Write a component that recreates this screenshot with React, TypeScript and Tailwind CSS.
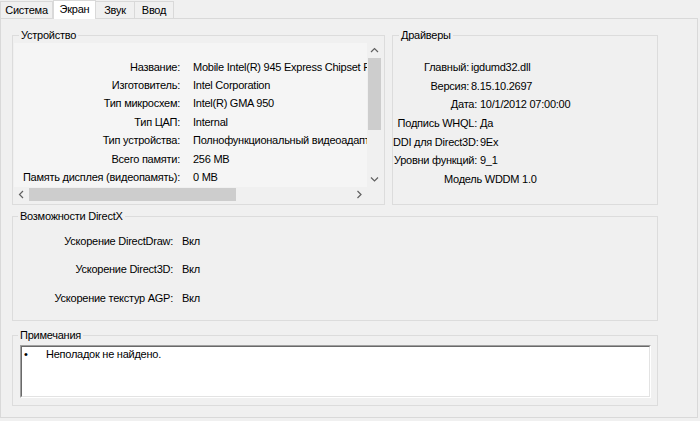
import React from "react";

function Chevron({ dir }: { dir: "up" | "down" | "left" | "right" }) {
  const d =
    dir === "up"
      ? "M1 5 L4.5 1.5 L8 5"
      : dir === "down"
      ? "M1 1.5 L4.5 5 L8 1.5"
      : dir === "left"
      ? "M5 1 L1.5 4.5 L5 8"
      : "M1.5 1 L5 4.5 L1.5 8";
  const w = dir === "up" || dir === "down" ? 9 : 7;
  const h = dir === "up" || dir === "down" ? 7 : 9;
  return (
    <svg width={w} height={h} viewBox={`0 0 ${w} ${h}`} fill="none">
      <path d={d} stroke="#606060" strokeWidth="1.2" />
    </svg>
  );
}

const deviceRows: [string, string][] = [
  ["Название:", "Mobile Intel(R) 945 Express Chipset Family"],
  ["Изготовитель:", "Intel Corporation"],
  ["Тип микросхем:", "Intel(R) GMA 950"],
  ["Тип ЦАП:", "Internal"],
  ["Тип устройства:", "Полнофункциональный видеоадаптер"],
  ["Всего памяти:", "256 MB"],
  ["Память дисплея (видеопамять):", "0 MB"],
];

const dxRows: [string, string][] = [
  ["Ускорение DirectDraw:", "Вкл"],
  ["Ускорение Direct3D:", "Вкл"],
  ["Ускорение текстур AGP:", "Вкл"],
];

export default function App() {
  return (
    <div className="w-[700px] h-[421px] bg-[#f0f0f0] text-[11px] leading-[13px] tracking-[-0.25px] text-black font-['Liberation_Sans',Arial,sans-serif] overflow-hidden">
      {/* Tabs */}
      <div className="relative z-10 flex h-[19px] items-start">
        <div className="mt-[1px] h-[17px] w-[53px] border border-b-0 border-[#d9d9d9] bg-[#f0f0f0] flex items-center justify-center">
          Система
        </div>
        <div className="h-[19px] w-[43px] border border-b-0 border-[#d9d9d9] bg-white flex items-center justify-center pb-[1px]">
          Экран
        </div>
        <div className="mt-[1px] h-[17px] w-[39px] border border-l-0 border-b-0 border-[#d9d9d9] bg-[#f0f0f0] flex items-center justify-center">
          Звук
        </div>
        <div className="mt-[1px] h-[17px] w-[39px] border border-l-0 border-b-0 border-[#d9d9d9] bg-[#f0f0f0] flex items-center justify-center">
          Ввод
        </div>
      </div>

      {/* Panel */}
      <div className="-mt-px h-[400px] w-[698px] border border-[#d9d9d9] bg-[#f0f0f0] pl-[11px] pt-[10px] flex flex-col">
        <div className="flex gap-[7px]">
          {/* Device */}
          <fieldset className="w-[373px] h-[176px] border border-[#dcdcdc] min-w-0">
            <legend className="ml-[6px] px-[2px] leading-[12px] bg-[#f0f0f0]">Устройство</legend>
            <div className="ml-[1px] mt-[2px] w-[368px] h-[159px] flex flex-col">
              <div className="flex h-[144px]">
                <div className="flex-1 overflow-hidden bg-[#f5f5f5] pt-[15px]">
                  {deviceRows.map(([l, v]) => (
                    <div key={l} className="flex h-[18.4px] items-center whitespace-nowrap">
                      <span className="w-[166px] shrink-0 text-right">{l}</span>
                      <span className="ml-[13px]">{v}</span>
                    </div>
                  ))}
                </div>
                <div className="w-[15px] flex flex-col bg-[#f0f0f0]">
                  <div className="h-[15px] flex items-center justify-center">
                    <Chevron dir="up" />
                  </div>
                  <div className="flex-1 flex flex-col items-center">
                    <div className="h-[72px] w-[13px] bg-[#cdcdcd]" />
                  </div>
                  <div className="h-[15px] flex items-center justify-center">
                    <Chevron dir="down" />
                  </div>
                </div>
              </div>
              <div className="flex h-[15px]">
                <div className="w-[353px] flex bg-[#f0f0f0]">
                  <div className="w-[15px] flex items-center justify-center">
                    <Chevron dir="left" />
                  </div>
                  <div className="flex-1 flex items-center">
                    <div className="h-[13px] w-[207px] bg-[#cdcdcd]" />
                  </div>
                  <div className="w-[15px] flex items-center justify-center">
                    <Chevron dir="right" />
                  </div>
                </div>
                <div className="w-[15px] bg-[#f0f0f0]" />
              </div>
            </div>
          </fieldset>

          {/* Drivers */}
          <fieldset className="w-[266px] h-[176px] border border-[#dcdcdc] min-w-0">
            <legend className="ml-[6px] px-[2px] leading-[12px] bg-[#f0f0f0]">Драйверы</legend>
            <div className="pt-[17px] whitespace-nowrap">
              <div className="flex h-[18.7px] items-center">
                <span className="w-[76px] shrink-0 text-right">Главный:</span>
                <span className="ml-[2px]">igdumd32.dll</span>
              </div>
              <div className="flex h-[18.7px] items-center">
                <span className="w-[76px] shrink-0 text-right">Версия:</span>
                <span className="ml-[2px]">8.15.10.2697</span>
              </div>
              <div className="flex h-[18.7px] items-center">
                <span className="w-[84px] shrink-0 text-right">Дата:</span>
                <span className="ml-[3px]">10/1/2012 07:00:00</span>
              </div>
              <div className="flex h-[18.7px] items-center">
                <span className="w-[84px] shrink-0 text-right">Подпись WHQL:</span>
                <span className="ml-[3px]">Да</span>
              </div>
              <div className="flex h-[18.7px] items-center">
                <span className="w-[84px] shrink-0 text-right">DDI для Direct3D:</span>
                <span className="ml-[3px]">9Ex</span>
              </div>
              <div className="flex h-[18.7px] items-center">
                <span className="w-[84px] shrink-0 text-right">Уровни функций:</span>
                <span className="ml-[3px]">9_1</span>
              </div>
              <div className="flex h-[18.7px] items-center pl-[51px]">Модель WDDM 1.0</div>
            </div>
          </fieldset>
        </div>

        {/* DirectX features */}
        <fieldset className="mt-[5px] w-[646px] h-[111px] border border-[#dcdcdc] min-w-0">
          <legend className="ml-[5px] px-[2px] leading-[12px] bg-[#f0f0f0]">Возможности DirectX</legend>
          <div className="pt-[5px]">
            {dxRows.map(([l, v]) => (
              <div key={l} className="flex h-[28.5px] items-center whitespace-nowrap">
                <span className="w-[160px] shrink-0 text-right">{l}</span>
                <span className="ml-[9px]">{v}</span>
              </div>
            ))}
          </div>
        </fieldset>

        {/* Notes */}
        <fieldset className="mt-[8px] w-[646px] h-[77px] border border-[#dcdcdc] min-w-0">
          <legend className="ml-[5px] px-[2px] leading-[12px] bg-[#f0f0f0]">Примечания</legend>
          <div className="ml-[7px] mt-[4px] w-[631px] h-[53px] border border-t-[#a0a0a0] border-l-[#a0a0a0] border-r-white border-b-white">
            <div className="h-full border border-t-[#696969] border-l-[#696969] border-r-[#e3e3e3] border-b-[#e3e3e3] bg-white pt-[1px]">
              <div className="flex items-center h-[13px]">
                <span className="w-[21px] pl-[2px]">•</span>
                <span className="ml-[3px]">Неполадок не найдено.</span>
              </div>
            </div>
          </div>
        </fieldset>
      </div>
    </div>
  );
}
